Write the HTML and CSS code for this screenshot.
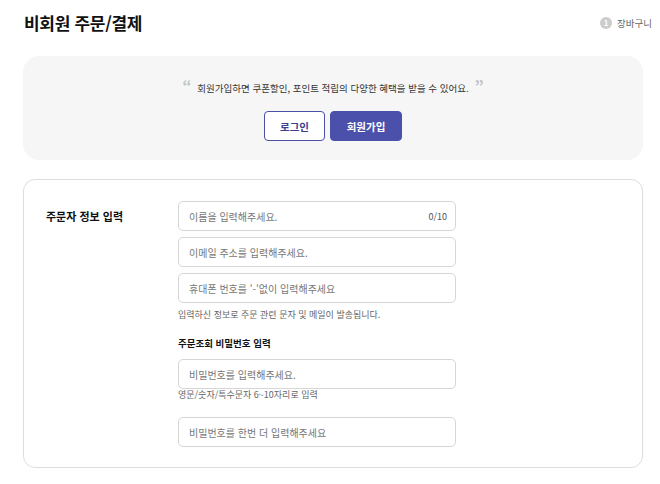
FILE: index.html
```html
<!DOCTYPE html>
<html lang="ko">
<head>
    <meta charset="UTF-8">
    <meta name="viewport" content="width=device-width, initial-scale=1.0">
    <title>비회원 주문/결제</title>
    <link rel="stylesheet" href="styles.css">
</head>
<body>
    <div class="page">
        <!-- Page header with step indicator -->
        <div class="page-header">
            <h1>비회원 주문/결제</h1>
            <div class="step">
                <span class="step-num">1</span>
                <span class="step-label">장바구니</span>
            </div>
        </div>

        <!-- Member benefit banner -->
        <div class="member-banner">
            <p class="banner-text">
                <span class="quote">&ldquo;</span>
                회원가입하면 쿠폰할인, 포인트 적립의 다양한 혜택을 받을 수 있어요.
                <span class="quote">&rdquo;</span>
            </p>
            <div class="banner-buttons">
                <button class="btn btn-outline">로그인</button>
                <button class="btn btn-primary">회원가입</button>
            </div>
        </div>

        <!-- Orderer info -->
        <div class="form-card">
            <div class="form-row">
                <div class="form-label">주문자 정보 입력</div>
                <div class="form-fields">
                    <div class="input-wrap">
                        <input type="text" class="input-field" placeholder="이름을 입력해주세요." maxlength="10">
                        <span class="counter">0/10</span>
                    </div>
                    <input type="email" class="input-field" placeholder="이메일 주소를 입력해주세요.">
                    <input type="tel" class="input-field" placeholder="휴대폰 번호를 '-'없이 입력해주세요">
                    <p class="help-text">입력하신 정보로 주문 관련 문자 및 메일이 발송됩니다.</p>

                    <div class="sub-label">주문조회 비밀번호 입력</div>
                    <input type="password" class="input-field" placeholder="비밀번호를 입력해주세요.">
                    <p class="help-text tight">영문/숫자/특수문자 6~10자리로 입력</p>
                    <input type="password" class="input-field spaced" placeholder="비밀번호를 한번 더 입력해주세요">
                </div>
            </div>
        </div>
    </div>
</body>
</html>
```

FILE: styles.css
```css
* {
    margin: 0;
    padding: 0;
    box-sizing: border-box;
}

body {
    font-family: "Noto Sans CJK KR", "Noto Sans", sans-serif;
    background-color: #fff;
    color: #111;
}

.page {
    padding: 0 17px 0 23px;
}

/* Header */
.page-header {
    display: flex;
    justify-content: space-between;
    align-items: center;
    height: 44px;
    padding-top: 1px;
}

.page-header h1 {
    font-size: 17px;
    font-weight: 700;
    letter-spacing: -0.3px;
    padding-left: 1px;
}

.step {
    display: flex;
    align-items: center;
    gap: 5px;
    margin-right: -9px;
}

.step-num {
    width: 12px;
    height: 12px;
    border-radius: 50%;
    background-color: #ccc;
    color: #fff;
    font-size: 8px;
    font-weight: 700;
    display: flex;
    align-items: center;
    justify-content: center;
}

.step-label {
    font-size: 9.5px;
    color: #666;
}

/* Benefit banner */
.member-banner {
    margin-top: 12px;
    height: 104px;
    background-color: #f6f6f6;
    border-radius: 16px;
    display: flex;
    flex-direction: column;
    align-items: center;
    padding-top: 22px;
}

.banner-text {
    font-size: 9.5px;
    color: #333;
    display: flex;
    align-items: flex-start;
    gap: 6px;
    height: 20px;
    line-height: 20px;
}

.quote {
    font-size: 14px;
    font-weight: 900;
    color: #c4c4c4;
    line-height: 14px;
}

.banner-buttons {
    display: flex;
    gap: 5px;
    margin-top: 13px;
}

.btn {
    height: 30px;
    border-radius: 4px;
    font-family: inherit;
    font-size: 10.5px;
    font-weight: 700;
    cursor: pointer;
}

.btn-outline {
    width: 61px;
    background-color: #fff;
    color: #3c3f8f;
    border: 1px solid #4a4fa8;
}

.btn-primary {
    width: 72px;
    background-color: #4b50ab;
    color: #fff;
    border: 1px solid #4b50ab;
}

/* Form card */
.form-card {
    margin-top: 19px;
    height: 289px;
    border: 1px solid #ddd;
    border-radius: 12px;
    padding: 21px 22px;
}

.form-row {
    display: flex;
}

.form-label {
    width: 132px;
    font-size: 11px;
    font-weight: 700;
    padding-top: 7px;
}

.form-fields {
    width: 278px;
    display: flex;
    flex-direction: column;
    gap: 6px;
}

.input-wrap {
    position: relative;
}

.input-field {
    width: 100%;
    height: 30px;
    padding: 0 10px;
    border: 1px solid #d6d6d6;
    border-radius: 5px;
    font-family: inherit;
    font-size: 10px;
    color: #333;
    background-color: #fff;
}

.input-field::placeholder {
    color: #777;
}

.input-field:focus {
    outline: none;
    border-color: #4b50ab;
}

.counter {
    position: absolute;
    right: 9px;
    top: 9px;
    font-size: 9px;
    color: #555;
}

.help-text {
    font-size: 9px;
    color: #666;
    margin-top: -1px;
}

.help-text.tight {
    margin-top: -7px;
}

.sub-label {
    font-size: 9.5px;
    font-weight: 700;
    margin-top: 9px;
    margin-bottom: 3px;
}

.input-field.spaced {
    margin-top: 10px;
}
```
